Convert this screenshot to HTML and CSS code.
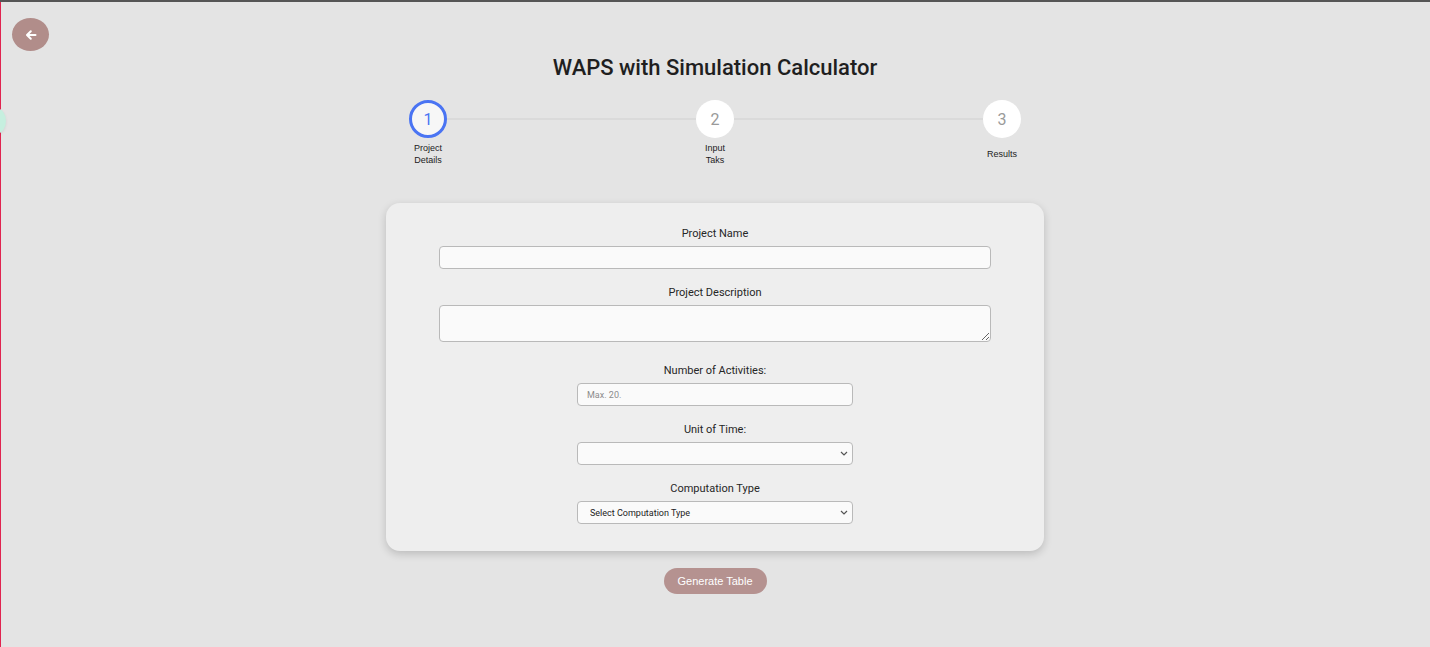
FILE: index.html
```html
<!DOCTYPE html>
<html lang="en">
<head>
<meta charset="utf-8">
<title>WAPS with Simulation Calculator</title>
<link rel="stylesheet" href="styles.css">
</head>
<body>
<div class="page">
  <span class="side-dot"></span>
  <header class="topbar">
    <button class="back-btn" aria-label="Back">
      <svg width="12" height="12" viewBox="0 0 12 12"><path d="M10.5 6H2.2M5.8 2.2L2 6l3.8 3.8" fill="none" stroke="#fff" stroke-width="2" stroke-linecap="round" stroke-linejoin="round"/></svg>
    </button>
  </header>
  <h1 class="title">WAPS with Simulation Calculator</h1>

  <div class="stepper">
    <div class="step">
      <div class="circle active">1</div>
      <div class="step-label">Project<br>Details</div>
    </div>
    <div class="connector"></div>
    <div class="step">
      <div class="circle">2</div>
      <div class="step-label">Input<br>Taks</div>
    </div>
    <div class="connector"></div>
    <div class="step">
      <div class="circle">3</div>
      <div class="step-label">Results</div>
    </div>
  </div>

  <form class="card">
    <label class="field">
      <span class="label">Project Name</span>
      <input class="control wide" type="text">
    </label>
    <label class="field">
      <span class="label">Project Description</span>
      <textarea class="control wide area"></textarea>
    </label>
    <label class="field">
      <span class="label">Number of Activities:</span>
      <input class="control narrow" type="text" placeholder="Max. 20.">
    </label>
    <label class="field">
      <span class="label">Unit of Time:</span>
      <select class="control narrow select"><option></option></select>
    </label>
    <label class="field">
      <span class="label">Computation Type</span>
      <select class="control narrow select"><option>Select Computation Type</option></select>
    </label>
  </form>

  <div class="actions">
    <button class="generate" type="button">Generate Table</button>
  </div>
</div>
</body>
</html>
```

FILE: styles.css
```css
* { box-sizing: border-box; }
html, body { margin: 0; height: 100%; }
body {
  background: #e4e4e4;
  font-family: Roboto, "Noto Sans", Arial, sans-serif;
  color: #222;
  border-top: 2px solid #555;
  box-shadow: inset 1px 0 0 #e0244f;
  overflow: hidden;
}
.page {
  position: relative;
  display: flex;
  flex-direction: column;
  align-items: center;
  padding-top: 16px;
  min-height: 100%;
}
.side-dot {
  position: absolute;
  left: -14px;
  top: 106px;
  width: 20px;
  height: 26px;
  border-radius: 50%;
  background: #c6efdf;
  box-shadow: 0 1px 3px rgba(0,0,0,0.08);
}
.topbar {
  align-self: stretch;
  display: flex;
  padding-left: 12px;
}
.back-btn {
  width: 37px;
  height: 33px;
  border: none;
  border-radius: 50%;
  background: #b18d8a;
  display: flex;
  align-items: center;
  justify-content: center;
  padding: 0;
  cursor: pointer;
}
.title {
  margin: 4px 0 0;
  font-size: 22px;
  line-height: 26px;
  font-weight: 500;
  color: #1f1f1f;
}
.stepper {
  display: flex;
  width: 612px;
  margin-top: 19px;
}
.step {
  width: 38px;
  display: flex;
  flex-direction: column;
  align-items: center;
}
.circle {
  width: 38px;
  height: 38px;
  border-radius: 50%;
  background: #fff;
  color: #9a9a9a;
  font-size: 16px;
  display: flex;
  align-items: center;
  justify-content: center;
}
.circle.active {
  border: 3px solid #4a74f3;
  color: #4a74f3;
  background: #f7f7f7;
}
.connector {
  flex: 1;
  height: 2px;
  background: #dadada;
  margin-top: 18px;
}
.step-label {
  margin-top: 4px;
  height: 24px;
  width: 60px;
  display: flex;
  align-items: center;
  justify-content: center;
  text-align: center;
  font-family: "Liberation Sans", Arial, sans-serif;
  font-size: 9px;
  line-height: 12px;
  color: #222;
}
.card {
  margin: 37px 0 0;
  width: 658px;
  padding: 24px 53px 27px;
  background: #eeeeee;
  border-radius: 14px;
  box-shadow: 0 3px 8px rgba(0,0,0,0.18);
  display: flex;
  flex-direction: column;
  align-items: center;
  gap: 17px;
}
.field {
  display: flex;
  flex-direction: column;
  align-items: center;
  gap: 5px;
  width: 100%;
}
.label {
  font-size: 11px;
  line-height: 14px;
  color: #262626;
}
.control {
  display: block;
  height: 23px;
  border: 1px solid #b9b9b9;
  border-radius: 4px;
  background: #fafafa;
  font-family: Roboto, Arial, sans-serif;
  margin: 0;
}
.wide { width: 552px; }
.area { height: 37px; resize: vertical; }
.narrow { width: 276px; }
input.control { padding: 0 9px; font-size: 9px; }
input.control::placeholder { color: #8c8c8c; }
.select {
  -webkit-appearance: none;
  appearance: none;
  font-size: 9px;
  color: #222;
  padding: 0 20px 0 12px;
  background: #fafafa url("data:image/svg+xml,%3Csvg xmlns='http://www.w3.org/2000/svg' width='8' height='5' viewBox='0 0 8 5'%3E%3Cpath d='M1 1l3 3 3-3' fill='none' stroke='%23555' stroke-width='1.2'/%3E%3C/svg%3E") no-repeat right 4px center;
}
.card .field:nth-child(3) { margin-top: 5px; }
.actions {
  margin-top: 17px;
}
.generate {
  width: 103px;
  height: 26px;
  border: none;
  border-radius: 13px;
  background: #b59290;
  color: #fff;
  font-family: "Liberation Sans", Arial, sans-serif;
  font-size: 11px;
  padding: 0;
  cursor: pointer;
}
```
